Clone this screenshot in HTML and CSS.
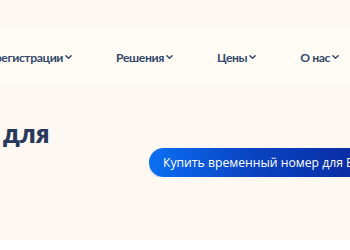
FILE: index.html
```html
<!DOCTYPE html>
<html lang="ru">
<head>
<meta charset="utf-8">
<link rel="stylesheet" href="styles.css">
</head>
<body>
<div class="page">
  <header class="header">
    <nav class="nav">
      <a class="nav-item">регистрации<svg class="chev" viewBox="0 0 8 6"><path d="M1 1.5 4 4.5 7 1.5"/></svg></a>
      <a class="nav-item">Решения<svg class="chev" viewBox="0 0 8 6"><path d="M1 1.5 4 4.5 7 1.5"/></svg></a>
      <a class="nav-item">Цены<svg class="chev" viewBox="0 0 8 6"><path d="M1 1.5 4 4.5 7 1.5"/></svg></a>
      <a class="nav-item">О нас<svg class="chev" viewBox="0 0 8 6"><path d="M1 1.5 4 4.5 7 1.5"/></svg></a>
    </nav>
  </header>
  <section class="hero">
    <h1 class="title">для</h1>
    <div class="cta-col">
      <a class="cta">Купить временный номер для ВКонтакте</a>
    </div>
  </section>
</div>
<footer class="bottom"></footer>
</body>
</html>
```

FILE: styles.css
```css
html, body {
  margin: 0;
  padding: 0;
  background: #ffffff;
}
.page {
  background: #fdf8f1;
  height: 240px;
  overflow: hidden;
  padding-top: 28px;
  box-sizing: border-box;
}
.header {
  background: #fffcf6;
  height: 56px;
}
.nav {
  display: flex;
  justify-content: flex-end;
  align-items: center;
  gap: 44px;
  height: 56px;
  padding-right: 11px;
  white-space: nowrap;
}
.nav-item {
  display: flex;
  align-items: center;
  gap: 2px;
  font-family: "Lato", "Noto Sans", sans-serif;
  font-weight: 700;
  font-size: 12.2px;
  letter-spacing: -0.4px;
  color: #34476b;
  padding-top: 2px;
}
.chev {
  width: 7px;
  height: 6px;
  fill: none;
  stroke: #34476b;
  stroke-width: 1.6;
  stroke-linecap: round;
  stroke-linejoin: round;
}
.hero {
  display: grid;
  grid-template-columns: 149px 1fr;
  white-space: nowrap;
}
.title {
  margin: 0;
  padding: 33px 0 0 3px;
  font-family: "Lato", "Noto Sans", sans-serif;
  font-weight: 800;
  font-size: 26px;
  line-height: 32px;
  color: #283a5c;
}
.cta-col {
  padding-top: 64px;
  overflow: hidden;
}
.cta {
  display: inline-block;
  height: 29px;
  line-height: 29px;
  padding: 0 18px 0 14px;
  border-radius: 15px;
  background: linear-gradient(90deg, #0b70f2 0%, #0a45c4 35%, #0a1d8e 100%);
  color: #ffffff;
  font-family: "Open Sans", "Noto Sans", sans-serif;
  font-size: 12.2px;
  box-shadow: 0 1px 2px rgba(10, 40, 140, 0.25);
}
```
